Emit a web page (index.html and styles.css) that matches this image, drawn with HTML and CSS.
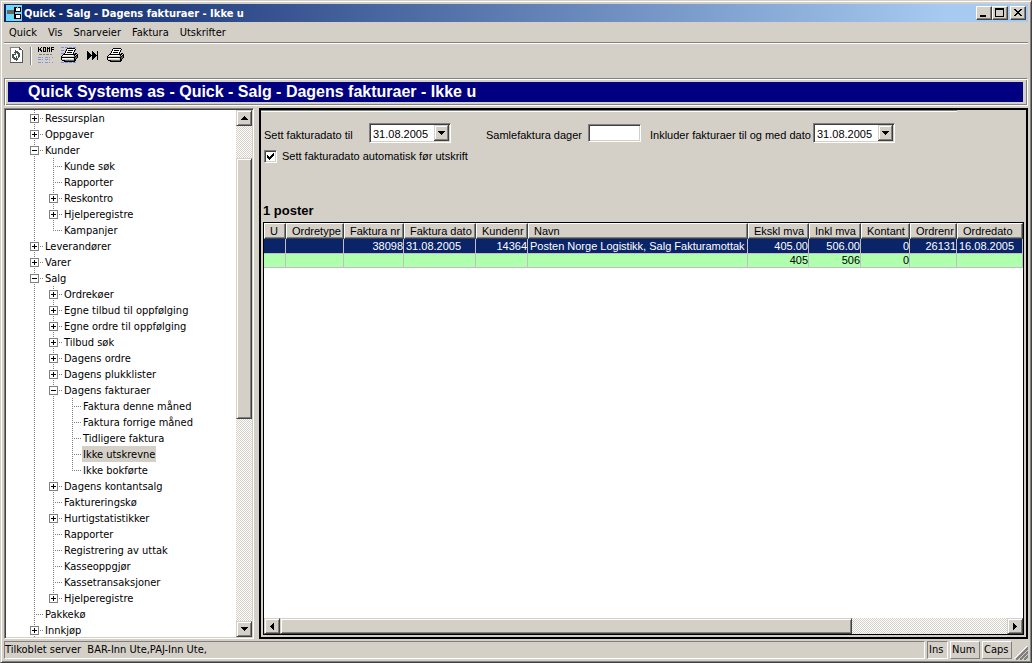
FILE: index.html
```
<!DOCTYPE html>
<html lang="no">
<head>
<meta charset="utf-8">
<title>Quick - Salg - Dagens fakturaer - Ikke u</title>
<link rel="stylesheet" href="styles.css">
</head>
<body>
<svg class="defs" width="0" height="0" aria-hidden="true">
  <symbol id="printer" viewBox="0 0 17 16">
    <path fill="#fff" d="M6 1h8v2h-1v2h-1v2H4V5h1V3h1z"/>
    <path fill="#d4d0c8" d="M1 8h14v5H1z"/>
    <path fill="#606060" d="M13 9h3v2h-1v1h-1v2h-1zM3 13h10v1H3z"/>
    <path d="M6 1h8v1H6zM14 2h1v1h-1zM13 3h1v2h-1zM12 5h1v2h-1zM5 2h1v2H5zM4 4h1v2H4zM3 6h1v1H3zM2 7h12v1H2zM1 8h1v1H1zM0 9h1v4H0zM1 10h12v1H1zM1 13h3v1H1zM3 14h11v1H3zM13 10h1v4h-1zM14 6h1v2h-1zM15 6h1v1h-1zM16 7h1v4h-1zM15 11h1v1h-1zM14 12h1v2h-1zM13 8h1v1h-1zM14 9h1v1h-1zM15 8h1v1h-1zM7 3h5v1H7zM6 5h5v1H6z"/>
    <path fill="#fff" d="M2 8h10v1H2zM1 11h11v1H1z"/>
  </symbol>
</svg>
<div class="window">
  <header class="titlebar">
    <svg class="app-icon" width="16" height="16" shape-rendering="crispEdges" aria-hidden="true">
      <path fill="#6cd9f4" d="M0 0h16v16H0z"/><path fill="#666" d="M1 5h7v4H1z"/><path d="M8 2h1v12H8zM8 2h7v5H8zM8 9h7v5H8z"/><path fill="#fff" d="M10 3h4v3h-4zM10 10h4v3h-4z"/><path fill="#6cd9f4" d="M11 2h1v2h-1zM11 7h1v2h-1z"/>
    </svg>
    <h1>Quick - Salg - Dagens fakturaer - Ikke u</h1>
    <div class="window-buttons">
      <button class="raised" aria-label="Minimer"><svg width="12" height="10"><path d="M2 7h6v2H2z"/></svg></button>
      <button class="raised" aria-label="Maksimer"><svg width="12" height="10"><path d="M1 0h9v9H1zM2 2v6h7V2z" fill-rule="evenodd"/></svg></button>
      <button class="raised close" aria-label="Lukk"><svg width="12" height="10"><path d="M2 1h2v1h1v1h2V2h1V1h2v1H9v1H8v1H7v1h1v1h1v1h1v1H8V7H7V6H5v1H4v1H2V7h1V6h1V5h1V4H4V3H3V2H2z"/></svg></button>
    </div>
  </header>
  <nav class="menubar">
    <a href="#">Quick</a><a href="#">Vis</a><a href="#">Snarveier</a><a href="#">Faktura</a><a href="#">Utskrifter</a>
  </nav>
  <div class="toolbar">
    <button aria-label="Oppdater"><svg width="13" height="16"><path fill="#fff" d="M0 0h10l3 3v12H0z"/><path fill="none" stroke="#808080" d="M.5 15V.5H10"/><path d="M9 0h1v1h1v1h1v1H9zM12 3h1v13h-1zM0 15h13v1H0z" fill="#555"/><path fill="#46554a" d="M5 3h1v1h2v1h1v1h1v3H8V7H7V6H6v2H5V6H4V5h1zM2 7h3v1H4v2h1v1h1V9h1v2h1v2H7v1H6v-1H4v-1H3v-1H2zM8 9h2v1H9v1H8z"/></svg></button>
    <span class="divider"></span>
    <button aria-label="Konfigurer"><svg width="16" height="16"><path d="M0 0h1v2h1V1h1V0h1v1H3v2h1v2H3V4H2V3H1v2H0zM5 0h3v5H5zM9 0h1v1h1V0h1v5h-1V2h-1v3H9zM13 0h3v1h-2v1h2v1h-2v2h-1z"/><path fill="#d4d0c8" d="M6 1h1v3H6z"/><path stroke="#808080" stroke-dasharray="3 1 2 1" d="M1 7.500h14"/><path stroke="#8494d8" stroke-dasharray="3 1 1 2" d="M0 10.500h15M0 12.500h12M0 15.500h15"/></svg></button>
    <button aria-label="Skriv ut liste"><svg width="17" height="16"><path stroke="#7f8fe0" stroke-dasharray="3 1" d="M0 .5h16M0 3.500h16M0 6.500h16M0 15.500h16"/><use href="#printer"/></svg></button>
    <button class="next" aria-label="Neste"><svg width="12" height="9"><path d="M0 0h1v1h1v1h1v1h1v1h1V0h1v1h1v1h1v1h1v1h1V0h1v9h-1V5H9v1H8v1H7v1H6v1H5V5H4v1H3v1H2v1H1v1H0z"/></svg></button>
    <button aria-label="Skriv ut"><svg width="17" height="16"><use href="#printer"/></svg></button>
  </div>
  <div class="banner"><h2>Quick Systems as - Quick - Salg - Dagens fakturaer - Ikke u</h2></div>

  <main class="workspace">
    <aside class="tree-pane">
      <ul class="tree">
        <li><div><button class="plus" aria-label="Utvid"></button><a href="#">Ressursplan</a></div></li>
        <li><div><button class="plus" aria-label="Utvid"></button><a href="#">Oppgaver</a></div></li>
        <li><div><button aria-label="Skjul"></button><a href="#">Kunder</a></div>
          <ul>
            <li><div><i></i><a href="#">Kunde søk</a></div></li>
            <li><div><i></i><a href="#">Rapporter</a></div></li>
            <li><div><button class="plus" aria-label="Utvid"></button><a href="#">Reskontro</a></div></li>
            <li><div><button class="plus" aria-label="Utvid"></button><a href="#">Hjelperegistre</a></div></li>
            <li><div><i></i><a href="#">Kampanjer</a></div></li>
          </ul>
        </li>
        <li><div><button class="plus" aria-label="Utvid"></button><a href="#">Leverandører</a></div></li>
        <li><div><button class="plus" aria-label="Utvid"></button><a href="#">Varer</a></div></li>
        <li><div><button aria-label="Skjul"></button><a href="#">Salg</a></div>
          <ul>
            <li><div><button class="plus" aria-label="Utvid"></button><a href="#">Ordrekøer</a></div></li>
            <li><div><button class="plus" aria-label="Utvid"></button><a href="#">Egne tilbud til oppfølging</a></div></li>
            <li><div><button class="plus" aria-label="Utvid"></button><a href="#">Egne ordre til oppfølging</a></div></li>
            <li><div><button class="plus" aria-label="Utvid"></button><a href="#">Tilbud søk</a></div></li>
            <li><div><button class="plus" aria-label="Utvid"></button><a href="#">Dagens ordre</a></div></li>
            <li><div><button class="plus" aria-label="Utvid"></button><a href="#">Dagens plukklister</a></div></li>
            <li><div><button aria-label="Skjul"></button><a href="#">Dagens fakturaer</a></div>
              <ul>
                <li><div><i></i><a href="#">Faktura denne måned</a></div></li>
                <li><div><i></i><a href="#">Faktura forrige måned</a></div></li>
                <li><div><i></i><a href="#">Tidligere faktura</a></div></li>
                <li><div><i></i><a href="#" class="selected">Ikke utskrevne</a></div></li>
                <li><div><i></i><a href="#">Ikke bokførte</a></div></li>
              </ul>
            </li>
            <li><div><button class="plus" aria-label="Utvid"></button><a href="#">Dagens kontantsalg</a></div></li>
            <li><div><i></i><a href="#">Faktureringskø</a></div></li>
            <li><div><button class="plus" aria-label="Utvid"></button><a href="#">Hurtigstatistikker</a></div></li>
            <li><div><i></i><a href="#">Rapporter</a></div></li>
            <li><div><i></i><a href="#">Registrering av uttak</a></div></li>
            <li><div><i></i><a href="#">Kasseoppgjør</a></div></li>
            <li><div><i></i><a href="#">Kassetransaksjoner</a></div></li>
            <li><div><button class="plus" aria-label="Utvid"></button><a href="#">Hjelperegistre</a></div></li>
          </ul>
        </li>
        <li><div><i></i><a href="#">Pakkekø</a></div></li>
        <li class="more"><div><button class="plus" aria-label="Utvid"></button><a href="#">Innkjøp</a></div></li>
      </ul>
      <div class="scrollbar vertical">
        <button class="raised" aria-label="Rull opp"><svg width="7" height="4"><path d="M3 0h1v1h1v1h1v1h1v1H0V3h1V2h1V1h1z"/></svg></button>
        <span class="before"></span><span class="thumb raised"></span><span class="after"></span>
        <button class="raised" aria-label="Rull ned"><svg width="7" height="4"><path d="M0 0h7v1H6v1H5v1H4v1H3V3H2V2H1V1H0z"/></svg></button>
      </div>
    </aside>

    <section class="content">
      <form class="filters">
        <div class="fields">
          <label for="from">Sett fakturadato til</label>
          <select id="from" class="sunken"><option>31.08.2005</option></select>
          <label for="days" class="spaced">Samlefaktura dager</label>
          <input id="days" type="text" class="sunken">
          <label for="to">Inkluder fakturaer til og med dato</label>
          <select id="to" class="sunken"><option>31.08.2005</option></select>
        </div>
        <div class="check">
          <input id="auto" type="checkbox" class="sunken" checked>
          <label for="auto">Sett fakturadato automatisk før utskrift</label>
        </div>
      </form>
      <h3>1 poster</h3>
      <div class="grid">
        <table>
          <colgroup><col class="c22"><col class="c58"><col class="c60"><col class="c72"><col class="c52"><col><col class="c61"><col class="c52"><col class="c49"><col class="c47"><col class="c66"></colgroup>
          <thead><tr><th>U</th><th>Ordretype</th><th>Faktura nr</th><th>Faktura dato</th><th>Kundenr</th><th>Navn</th><th>Ekskl mva</th><th>Inkl mva</th><th>Kontant</th><th>Ordrenr</th><th>Ordredato</th></tr></thead>
          <tbody>
            <tr class="active"><td></td><td></td><td class="num">38098</td><td>31.08.2005</td><td class="num">14364</td><td>Posten Norge Logistikk, Salg Fakturamottak</td><td class="num">405.00</td><td class="num">506.00</td><td class="num">0</td><td class="num">26131</td><td>16.08.2005</td></tr>
            <tr class="total"><td></td><td></td><td></td><td></td><td></td><td></td><td class="num">405</td><td class="num">506</td><td class="num">0</td><td></td><td></td></tr>
          </tbody>
        </table>
        <div class="scrollbar horizontal">
          <button class="raised" aria-label="Rull til venstre"><svg width="4" height="7"><path d="M3 0h1v7H3V6H2V5H1V4H0V3h1V2h1V1h1z"/></svg></button>
          <span class="thumb raised"></span><span class="after"></span>
          <button class="raised" aria-label="Rull til høyre"><svg width="4" height="7"><path d="M0 0h1v1h1v1h1v1h1v1H3v1H2v1H1v1H0z"/></svg></button>
        </div>
      </div>
    </section>
  </main>

  <footer class="status">
    <span class="message">Tilkoblet server&nbsp; BAR-Inn Ute,PAJ-Inn Ute,</span>
    <span class="ins">Ins</span><span class="key">Num</span><span class="key">Caps</span>
    <svg class="grip" width="14" height="14"><path stroke="#fff" d="M0 13L13 0M4 13L13 4M8 13l5-5"/><path stroke="#808080" stroke-width="2" d="M2 14L14 2M6 14l8-8M10 14l4-4"/></svg>
  </footer>
</div>
</body>
</html>
```
FILE: styles.css
```
:root {
  --face: #d4d0c8;
  --shadow: #808080;
  --dark: #404040;
  --navy: #0a246a;
  --ui: "DejaVu Sans Condensed", "DejaVu Sans", sans-serif;
  --form: "Liberation Sans", Arial, sans-serif;
}
* { box-sizing: border-box; }
body { margin: 0; background: var(--face); color: #000; font: 11px/16px var(--ui); }
button { padding: 0; border: 0; background: none; color: inherit; font: inherit; }
svg { display: block; shape-rendering: crispEdges; }
a { color: inherit; text-decoration: none; }
h1, h2, h3, ul { margin: 0; padding: 0; }
ul { list-style: none; }
.defs { position: absolute; }

.window {
  display: flex; flex-direction: column; height: 100vh; padding: 3px 2px 1px 3px;
  border: 1px solid; border-color: var(--face) var(--dark) var(--dark) var(--face);
  box-shadow: inset 1px 1px #fff, inset -1px -1px var(--shadow);
}
.raised {
  display: flex; align-items: center; justify-content: center; background: var(--face);
  border: 1px solid; border-color: var(--face) var(--dark) var(--dark) var(--face);
  box-shadow: inset 1px 1px #fff, inset -1px -1px var(--shadow);
}
.sunken {
  border: 1px solid; border-color: var(--shadow) #fff #fff var(--shadow);
  box-shadow: inset 1px 1px var(--dark), inset -1px -1px var(--face);
}

.titlebar {
  display: flex; align-items: center; flex: none; height: 18px; padding: 0 2px; margin-right: 1px;
  background: linear-gradient(90deg, #0a246a, #a6caf0 92%);
}
.titlebar h1 { flex: 1; padding: 1px 0 0 2px; color: #fff; font-size: 11px; line-height: 17px; }
.window-buttons { display: flex; }
.window-buttons button { width: 16px; height: 14px; border-color: #fff var(--dark) var(--dark) #fff; box-shadow: inset -1px -1px var(--shadow); }
.window-buttons .close { margin-left: 2px; }

.menubar {
  display: flex; flex: none; gap: 11px; height: 22px; padding: 3px 5px 0; margin-right: 1px;
  border-bottom: 1px solid #fff; box-shadow: inset 0 -1px var(--shadow);
}
.toolbar { display: flex; flex: none; align-items: flex-start; height: 34px; padding: 3px 6px; }
.toolbar button { margin-right: 7px; }
.toolbar .next { padding: 4px 1px 0 2px; }
.divider { width: 2px; height: 18px; margin-right: 6px; border-left: 1px solid var(--shadow); border-right: 1px solid #fff; }

.banner {
  flex: none; height: 28px; padding: 3px 4px 3px 3px; margin: 0 1px 2px 0;
  border: 1px solid; border-color: var(--shadow) #fff #fff var(--shadow);
  box-shadow: inset 1px 1px #fff, inset -1px -1px var(--shadow);
}
.banner h2 { padding-left: 20px; background: #000080; color: #fff; font: bold 16px/20px var(--form); }

.workspace { display: flex; flex: 1; min-height: 0; margin-right: 1px; }
.tree-pane {
  display: flex; flex: none; width: 250px; padding: 1px; background: #fff;
  border: 1px solid; border-color: var(--shadow) #fff #fff var(--shadow);
  box-shadow: inset 1px 1px var(--dark), inset -1px -1px var(--face);
}
.tree { flex: 1; min-width: 0; padding-left: 24px; overflow: hidden; }
.tree li { background: repeating-linear-gradient(var(--shadow) 0 1px, transparent 1px 2px) 4px 0 / 1px 100% no-repeat; }
.tree li:last-child { background-size: 1px 8px; }
.tree li.more { background-size: 1px 100%; }
.tree li ul { padding-left: 19px; }
.tree div {
  display: flex; align-items: center; height: 16px; white-space: nowrap;
  background: repeating-linear-gradient(90deg, var(--shadow) 0 1px, transparent 1px 2px) 4px 8px / 9px 1px no-repeat;
}
.tree i { width: 9px; }
.tree button {
  width: 9px; height: 9px; margin-top: 1px; border: 1px solid var(--shadow);
  background: linear-gradient(#000, #000) center / 5px 1px no-repeat, #fff;
}
.tree .plus {
  background: linear-gradient(#000, #000) center / 5px 1px no-repeat, linear-gradient(#000, #000) center / 1px 5px no-repeat, #fff;
}
.tree a { height: 16px; margin-left: 5px; padding: 1px 1px 0; }
.tree .selected { background: var(--face); }

.scrollbar { display: flex; background: repeating-conic-gradient(#fff 0 25%, var(--face) 0 50%) 0 0 / 2px 2px; }
.scrollbar button { flex: none; width: 16px; height: 16px; }
.vertical { flex-direction: column; width: 16px; }
.vertical .before { flex: 32; }
.vertical .thumb { flex: 260; }
.vertical .after { flex: 203; }
.horizontal { height: 16px; }
.horizontal .thumb { flex: 572; }
.horizontal .after { flex: 155; }

.content {
  display: flex; flex: 1; flex-direction: column; min-width: 0; margin-left: 5px; padding: 2px;
  border: 2px solid #000; font: 11px/16px var(--form);
  background: linear-gradient(var(--shadow) 50%, #fff 50%) 0 0 / 91% 2px no-repeat;
}
.filters { flex: none; height: 90px; padding: 11px 1px; }
.fields { display: flex; align-items: center; height: 20px; }
.fields label { padding-top: 3px; white-space: nowrap; }
.fields label:first-child { width: 105px; }
.fields .spaced { width: 102px; margin-left: 35px; }
.fields label:last-of-type { width: 163px; margin-left: 9px; }
.fields input { width: 53px; height: 18px; background-color: #fff; }
.fields select {
  width: 82px; height: 20px; padding: 1px 3px 0; appearance: none; border-radius: 0; color: #000; font: inherit;
  background: #fff url("data:image/svg+xml,%3Csvg xmlns='http://www.w3.org/2000/svg' width='15' height='16' shape-rendering='crispEdges'%3E%3Cpath fill='%23404040' d='M0 0h15v16H0z'/%3E%3Cpath fill='%23d4d0c8' d='M0 0h14v15H0z'/%3E%3Cpath fill='%23808080' d='M1 1h13v14H1z'/%3E%3Cpath fill='%23fff' d='M1 1h12v13H1z'/%3E%3Cpath fill='%23d4d0c8' d='M2 2h11v12H2z'/%3E%3Cpath d='M4 6h7v1h-1v1H9v1H8v1H7V9H6V8H5V7H4z'/%3E%3C/svg%3E") right 1px top 1px no-repeat;
}
.check { display: flex; align-items: center; height: 16px; margin-top: 5px; }
.check input {
  width: 13px; height: 13px; margin: 0 5px 0 0; appearance: none;
  background: #fff url("data:image/svg+xml,%3Csvg xmlns='http://www.w3.org/2000/svg' width='7' height='7' shape-rendering='crispEdges'%3E%3Cpath d='M0 2h1v1h1v1h1V3h1V2h1V1h1V0h1v3H6v1H5v1H4v1H3v1H2V6H1V5H0z'/%3E%3C/svg%3E") center no-repeat;
}
.content h3 { flex: none; height: 20px; font: bold 13px/18px var(--form); }
.grid { display: flex; flex: 1; flex-direction: column; min-height: 0; background: #fff; border: 1px solid #000; }
.grid .scrollbar { margin-top: auto; }
table { width: 100%; border-collapse: separate; border-spacing: 0; table-layout: fixed; }
th {
  height: 16px; padding: 1px 0 0 5px; background: var(--face); font-weight: normal; line-height: 13px; text-align: left; white-space: nowrap;
  border: 1px solid; border-color: #fff var(--dark) var(--dark) #fff; box-shadow: inset -1px -1px var(--shadow);
}
td { height: 14px; padding: 0 2px; line-height: 13px; white-space: nowrap; border-right: 1px solid #c0c0c0; border-bottom: 1px solid #c0c0c0; }
.num { padding-right: 0; text-align: right; }
.active td { height: 15px; padding-top: 1px; background: var(--navy); color: #fff; }
.total td { background: #afffaf; }
.c22 { width: 22px; } .c47 { width: 47px; } .c49 { width: 49px; } .c52 { width: 52px; }
.c58 { width: 58px; } .c60 { width: 60px; } .c61 { width: 61px; } .c66 { width: 66px; } .c72 { width: 72px; }

.status { display: flex; flex: none; gap: 2px; height: 22px; padding-top: 2px; margin: 0 1px 0 0; }
.status span { height: 18px; padding: 0 1px; border: 1px solid; border-color: var(--shadow) #fff #fff var(--shadow); }
.status .message { flex: 1; padding-left: 0; }
.status .ins { width: 21px; }
.status .key { width: 30px; border-color: #fff var(--shadow) var(--shadow) #fff; }
.grip { margin-top: 5px; }
```
